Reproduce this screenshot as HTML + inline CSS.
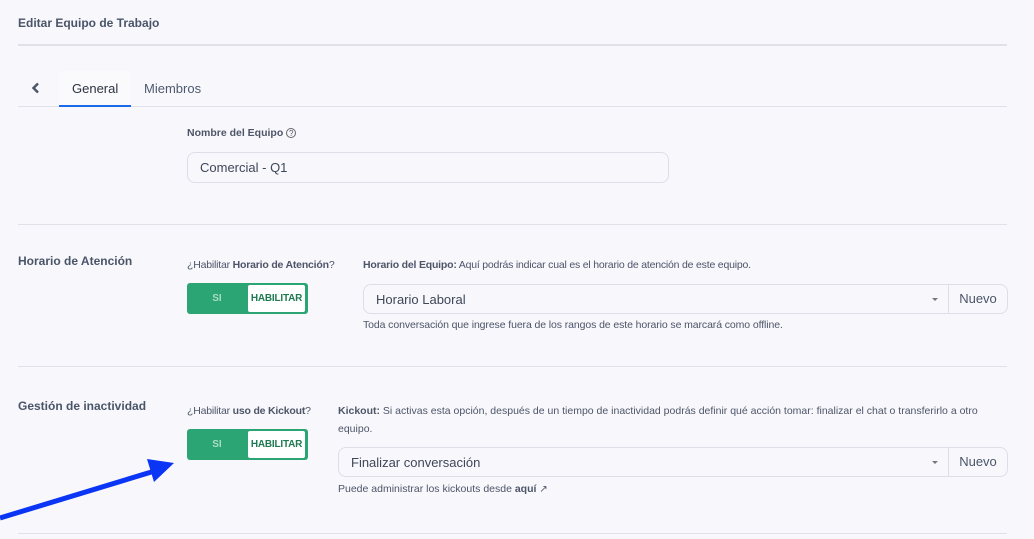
<!DOCTYPE html>
<html><head><meta charset="utf-8"><style>
*{margin:0;padding:0;box-sizing:border-box}
body{width:1034px;height:539px;background:#f7f7fc;font-family:"Liberation Sans",sans-serif;color:#4a5568;position:relative;overflow:hidden}
.a{position:absolute;white-space:nowrap}
.hr{position:absolute;left:18px;width:989px;height:1px;background:#e1e1ea}
.b{font-weight:bold}
.s{font-size:10.5px;color:#4d5567}
.inp{position:absolute;border:1px solid #dedee8;background:#f8f8fc;border-radius:8px;font-size:13px;color:#3e4658;padding-left:12px;display:flex;align-items:center}
.tog{position:absolute;width:121px;height:31px;background:#2ba574;border-radius:3px}
.tog .si{position:absolute;left:0;width:60px;top:0;height:31px;line-height:31px;text-align:center;color:#a9dcc5;font-size:10px;font-weight:bold}
.tog .hb{position:absolute;left:61px;top:2px;width:57px;height:27px;background:#fff;border-radius:2px;color:#1f7a52;font-size:10px;font-weight:bold;line-height:27px;text-align:center;letter-spacing:-0.2px}
.sel{position:absolute;border:1px solid #dedee8;border-radius:8px;background:#f8f8fc;height:30px}
.sel .t{position:absolute;left:12px;top:7px;font-size:13px;color:#3e4658}
.sel .c{position:absolute;top:13px;width:0;height:0;border-left:3px solid transparent;border-right:3px solid transparent;border-top:3px solid #777}
.sel .n{position:absolute;right:0;top:0;width:59px;height:28px;border-left:1px solid #dedee8;text-align:center;line-height:28px;font-size:13px;color:#4a5568}
</style></head><body>
<div class="a b" style="left:18px;top:16px;font-size:12px;color:#4a5568">Editar Equipo de Trabajo</div>
<div class="hr" style="top:44px;height:2px"></div>
<svg class="a" style="left:31px;top:82px" width="10" height="12"><path d="M7 1.5L2.5 6L7 10.5" stroke="#4a5568" stroke-width="2.4" fill="none"/></svg>
<div class="a" style="left:59px;top:71px;width:72px;height:35px;background:#fafafd"></div>
<div class="a" style="left:72px;top:81px;font-size:13px;color:#2d3340">General</div>
<div class="a" style="left:144px;top:81px;font-size:13px;color:#4f5a6e">Miembros</div>
<div class="hr" style="top:106px"></div>
<div class="a" style="left:59px;top:105px;width:72px;height:2px;background:#1a6ae8"></div>
<div class="a b s" style="left:187px;top:127px">Nombre del Equipo <span style="font-weight:normal;display:inline-block;width:10px;height:10px;border:1px solid #666;border-radius:50%;font-size:8px;text-align:center;line-height:9px">?</span></div>
<div class="inp" style="left:187px;top:152px;width:482px;height:31px">Comercial - Q1</div>
<div class="hr" style="top:224px"></div>
<div class="a b" style="left:18px;top:254px;font-size:12px">Horario de Atención</div>
<div class="a s" style="left:187px;top:259px;letter-spacing:-0.2px">¿Habilitar <b>Horario de Atención</b>?</div>
<div class="tog" style="left:187px;top:283px"><div class="si">SI</div><div class="hb">HABILITAR</div></div>
<div class="a s" style="left:363px;top:259px;letter-spacing:-0.2px"><b>Horario del Equipo:</b> Aquí podrás indicar cual es el horario de atención de este equipo.</div>
<div class="sel" style="left:363px;top:284px;width:645px"><div class="t">Horario Laboral</div><div class="c" style="left:568px"></div><div class="n">Nuevo</div></div>
<div class="a s" style="left:363px;top:319px;letter-spacing:-0.1px">Toda conversación que ingrese fuera de los rangos de este horario se marcará como offline.</div>
<div class="hr" style="top:366px"></div>
<div class="a b" style="left:18px;top:399px;font-size:12px">Gestión de inactividad</div>
<div class="a s" style="left:187px;top:405px;letter-spacing:-0.2px">¿Habilitar <b>uso de Kickout</b>?</div>
<div class="tog" style="left:187px;top:429px"><div class="si">SI</div><div class="hb">HABILITAR</div></div>
<div class="a s" style="left:338px;top:405px"><b>Kickout:</b> Si activas esta opción, después de un tiempo de inactividad podrás definir qué acción tomar: finalizar el chat o transferirlo a otro</div>
<div class="a s" style="left:338px;top:423px">equipo.</div>
<div class="sel" style="left:338px;top:447px;width:670px"><div class="t">Finalizar conversación</div><div class="c" style="left:593px"></div><div class="n">Nuevo</div></div>
<div class="a s" style="left:338px;top:483px">Puede administrar los kickouts desde <b>aquí</b> <span style="font-size:10px">↗</span></div>
<div class="hr" style="top:533px"></div>
<svg class="a" style="left:0;top:0" width="200" height="539"><path d="M0 518L158 470" stroke="#0a35f5" stroke-width="5"/><path d="M174 463L147 459L154 482Z" fill="#0a35f5"/></svg>
</body></html>
